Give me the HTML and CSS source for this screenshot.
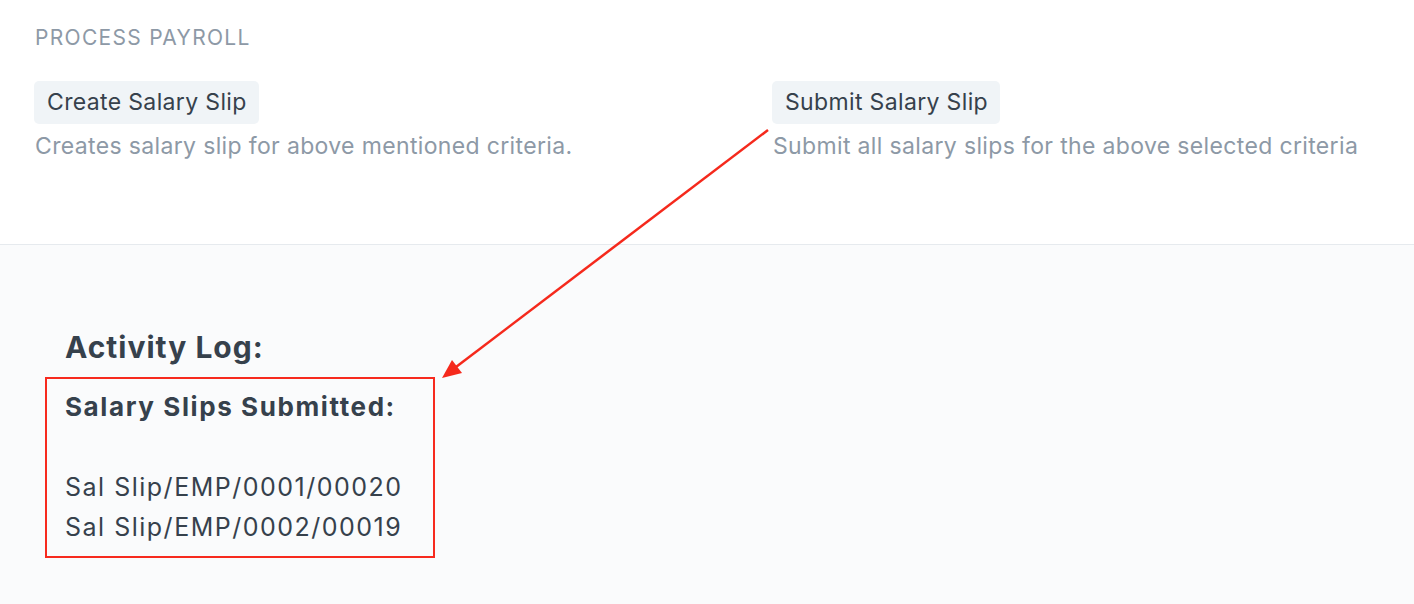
FILE: index.html
```html
<!DOCTYPE html>
<html>
<head>
<meta charset="utf-8">
<link rel="stylesheet" href="styles.css">
</head>
<body>
<div class="page">
  <section class="top">
    <div class="section-head">PROCESS PAYROLL</div>
    <div class="cols">
      <div class="col">
        <button class="btn">Create Salary Slip</button>
        <p class="help">Creates salary slip for above mentioned criteria.</p>
      </div>
      <div class="col">
        <button class="btn">Submit Salary Slip</button>
        <p class="help">Submit all salary slips for the above selected criteria</p>
      </div>
    </div>
  </section>
  <section class="bottom">
    <h3 class="log-title">Activity Log:</h3>
    <div class="log-box">
      <h4 class="log-sub">Salary Slips Submitted:</h4>
      <div class="log-list">
        <div>Sal Slip/EMP/0001/00020</div>
        <div>Sal Slip/EMP/0002/00019</div>
      </div>
    </div>
  </section>
  <svg class="arrow" width="1414" height="604" viewBox="0 0 1414 604">
    <line x1="768" y1="130" x2="456" y2="367" stroke="#f5291c" stroke-width="2.5"/>
    <polygon points="442,378 452,360 462,373" fill="#f5291c"/>
  </svg>
</div>
</body>
</html>
```

FILE: styles.css
```css
* { box-sizing: border-box; }
html, body { margin: 0; padding: 0; }
body {
  font-family: Inter, "Noto Sans", "Liberation Sans", sans-serif;
  color: #36414c;
  background: #fff;
}
.page {
  position: relative;
  width: 1414px;
  height: 604px;
  overflow: hidden;
  display: flex;
  flex-direction: column;
}
.top {
  height: 245px;
  padding: 26px 0 0 35px;
  border-bottom: 1px solid #e6eaee;
  background: #fff;
}
.section-head {
  font-size: 21px;
  letter-spacing: 1.3px;
  color: #8d99a6;
  line-height: 24px;
}
.cols {
  display: grid;
  grid-template-columns: 738px 1fr;
  margin-top: 31px;
}
.btn {
  font-family: inherit;
  font-size: 23px;
  letter-spacing: 0.35px;
  color: #36414c;
  background: #f0f4f7;
  border: none;
  border-radius: 5px;
  height: 43px;
  padding: 0 12px 0 13px;
  margin-left: -1px;
  line-height: 43px;
}
.help {
  margin: 8px 0 0;
  font-size: 23px;
  letter-spacing: 0.35px;
  line-height: 28px;
  color: #8d99a6;
}
.bottom {
  flex: 1;
  background: #fafbfc;
  padding: 84px 0 0 45px;
}
.log-title {
  margin: 0 0 0 20px;
  font-size: 30px;
  letter-spacing: 1px;
  font-weight: 700;
  line-height: 36px;
}
.log-box {
  margin-top: 12px;
  width: 390px;
  height: 181px;
  border: 2px solid #f72a1e;
  padding: 12px 0 0 18px;
}
.log-sub {
  margin: 0;
  font-size: 26px;
  letter-spacing: 1.6px;
  font-weight: 700;
  line-height: 32px;
}
.log-list {
  margin-top: 44px;
  font-size: 25px;
  letter-spacing: 1.5px;
  line-height: 40px;
}
.arrow {
  position: absolute;
  left: 0;
  top: 0;
  pointer-events: none;
}
```
